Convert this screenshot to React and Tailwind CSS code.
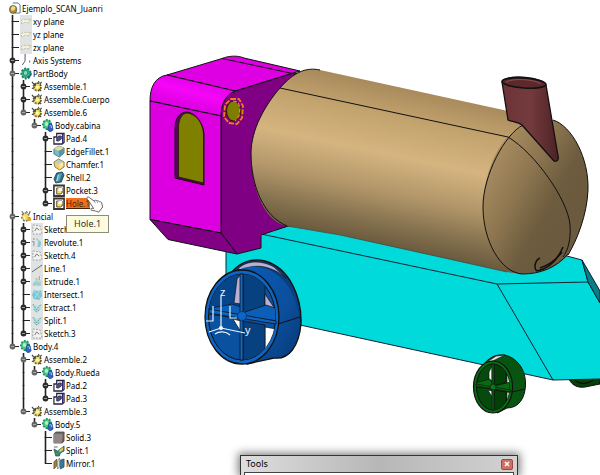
import React, { useState } from "react";

const TREE = [
  { icon: "plane", label: "xy plane" },
  { icon: "plane", label: "yz plane" },
  { icon: "plane", label: "zx plane" },
  { icon: "axis", label: "Axis Systems", node: true },
  {
    icon: "body", label: "PartBody", node: true, children: [
      { icon: "assemble", label: "Assemble.1", node: true },
      { icon: "assemble", label: "Assemble.Cuerpo", node: true },
      {
        icon: "assemble", label: "Assemble.6", node: true, children: [
          {
            icon: "bodyLinked", label: "Body.cabina", node: true, children: [
              { icon: "pad", label: "Pad.4", node: true },
              { icon: "fillet", label: "EdgeFillet.1" },
              { icon: "chamfer", label: "Chamfer.1" },
              { icon: "shell", label: "Shell.2" },
              { icon: "pocket", label: "Pocket.3", node: true },
              { icon: "pocket", label: "Hole.1", node: true, selected: true },
            ],
          },
        ],
      },
    ],
  },
  {
    icon: "set", label: "Incial", node: true, children: [
      { icon: "sketch", label: "Sketch.1", node: true },
      { icon: "revolute", label: "Revolute.1", node: true },
      { icon: "sketch", label: "Sketch.4", node: true },
      { icon: "line", label: "Line.1", node: true },
      { icon: "extrude", label: "Extrude.1", node: true },
      { icon: "intersect", label: "Intersect.1" },
      { icon: "extract", label: "Extract.1", node: true },
      { icon: "extract", label: "Split.1" },
      { icon: "sketch", label: "Sketch.3", node: true },
    ],
  },
  {
    icon: "bodyLinked", label: "Body.4", node: true, children: [
      {
        icon: "assemble", label: "Assemble.2", node: true, children: [
          {
            icon: "bodyLinked", label: "Body.Rueda", node: true, children: [
              { icon: "pad", label: "Pad.2", node: true },
              { icon: "pad", label: "Pad.3", node: true },
            ],
          },
        ],
      },
      {
        icon: "assemble", label: "Assemble.3", node: true, children: [
          {
            icon: "bodyLinked", label: "Body.5", node: true, children: [
              { icon: "solid", label: "Solid.3" },
              { icon: "split", label: "Split.1" },
              { icon: "mirror", label: "Mirror.1" },
            ],
          },
        ],
      },
    ],
  },
];

const Haze = () => <rect width="13" height="13" fill="#dfe3e3" />;

const ICONS = {
  root: (
    <>
      <path d="M4 1h6l2 2v8H6" fill="#fff" stroke="#3a7d96" />
      <circle cx="4.500" cy="7.500" r="4" fill="#a98b3a" stroke="#5a4a22" strokeWidth=".7" />
      <path d="M2 6l2-2 3 1-1 3-3 1z" fill="#f1dc84" />
    </>
  ),
  plane: (
    <>
      <Haze />
      <path d="M1 6l3-2 3 1 5-1-2 4-4-1-4 2z" fill="#efefe0" stroke="#b5b28a" strokeWidth=".7" strokeDasharray="3 1" />
      <path d="M3 6h6" stroke="#fff9cc" />
    </>
  ),
  axis: <path d="M5.500 0v7l-3 4M10.500 6.500v2" fill="none" stroke="#555" strokeWidth="1" />,
  body: (
    <>
      <circle cx="6.500" cy="6.500" r="5" fill="#35b58a" />
      <circle cx="6.500" cy="6.500" r="5" fill="none" stroke="#1a7a66" strokeWidth="2" strokeDasharray="2 1.500" />
      <circle cx="6" cy="6" r="2.500" fill="#7fe0ae" stroke="#177763" strokeWidth=".8" />
      <path d="M8 10c3 0 4-2 4-4" fill="none" stroke="#175c7c" strokeWidth="1.200" />
    </>
  ),
  bodyLinked: (
    <>
      <circle cx="5.500" cy="5.500" r="4.600" fill="#45c78c" />
      <circle cx="5.500" cy="5.500" r="4.600" fill="none" stroke="#23906a" strokeWidth="1.800" strokeDasharray="2 1.300" />
      <circle cx="5" cy="5" r="2" fill="#b4f1ad" />
      <path d="M8 4l3 2 1 5-3 2-3-2z" fill="#2f64c4" stroke="#173c80" strokeWidth=".7" />
      <path d="M8 7c2-1 3 0 2 2" stroke="#a4d8f5" fill="none" />
    </>
  ),
  assemble: (
    <>
      <circle cx="7" cy="7" r="3.800" fill="#efe06a" stroke="#60541a" strokeWidth="1.800" strokeDasharray="2 1.400" />
      <path d="M1 2l4 4M2 6l4-3M8 1l1 2M11.500 2l-2 2M1 8l2 1M11 11l-2-2" stroke="#444" strokeWidth="1.100" />
      <circle cx="7" cy="7" r="1.500" fill="#fff9b8" />
      <path d="M4 9l2 2" stroke="#c79021" />
    </>
  ),
  set: (
    <>
      <circle cx="6" cy="7" r="4" fill="#f3dc70" stroke="#7c7150" strokeWidth="1.600" strokeDasharray="2 1.500" />
      <path d="M2 1l2 3M7 1l1 2M11 1l-1 3" stroke="#555" />
      <path d="M8 7l4 1v3H8z" fill="#e6a23a" />
      <path d="M3 6l3 1-1 3" fill="#fffbd5" />
    </>
  ),
  pad: (
    <>
      <path d="M4 1.500h8v9l-2 1.500H1V5h3z" fill="#fff" stroke="#27233f" strokeWidth="1.300" />
      <path d="M4 6l2-2h3v3L6 9H4z" fill="#55506e" stroke="#25204d" strokeWidth=".8" />
      <path d="M10.500 2v9" stroke="#2e2a7c" strokeWidth="1.500" />
    </>
  ),
  fillet: (
    <>
      <path d="M1 4l5-3 6 2v5l-5 4-6-3z" fill="#79bdca" stroke="#39697a" strokeWidth=".8" />
      <path d="M1 4l5-3 6 2-5 3z" fill="#e8dc98" />
      <path d="M6 6l6-3v5l-5 4z" fill="#5496a5" />
    </>
  ),
  chamfer: (
    <>
      <path d="M1 4l5-3 6 3v5l-5 3-5-3z" fill="#f3cf68" stroke="#77652b" strokeWidth=".8" />
      <path d="M2 4l4-2 5 2-4 2z" fill="#a8cfe5" />
      <path d="M7 6l4-2v4l-4 3z" fill="#fdeaa3" />
    </>
  ),
  shell: (
    <>
      <path d="M4 2l6-1 2 3-3 7-6 1-2-4z" fill="#2d6d86" stroke="#1b3a4b" strokeWidth=".8" />
      <path d="M5 3l5-1-3 8-4 1z" fill="#58a3b6" />
      <path d="M6 4l-2 6" stroke="#c5e9f0" />
    </>
  ),
  pocket: (
    <>
      <path d="M1 1.500h11v10.500H1z" fill="#fff" stroke="#3a3634" strokeWidth="1.800" />
      <path d="M4 4h6v5l-2 1H4z" fill="#f2df74" stroke="#4a401c" strokeWidth=".9" />
      <path d="M6 4h4v3H6z" fill="#fff" />
    </>
  ),
  sketch: (
    <>
      <Haze />
      <path d="M2 2l8 1 2 8H2z" fill="#f2f3f1" stroke="#858a8a" strokeWidth=".8" strokeDasharray="2 1.500" />
      <path d="M4 8l2-3 3 2" stroke="#555" strokeWidth=".8" fill="none" />
    </>
  ),
  revolute: (
    <>
      <Haze />
      <path d="M3 2v9M6 3l4 3-1 5" stroke="#a98f72" fill="none" strokeDasharray="2 1" />
      <path d="M8 4l3 2-1 5H7z" fill="#86cbd0" />
      <path d="M1 5l3 3" stroke="#67a7a9" />
    </>
  ),
  line: (
    <>
      <Haze />
      <path d="M1 10L12 3" stroke="#666" strokeWidth="1" />
    </>
  ),
  extrude: (
    <>
      <Haze />
      <path d="M2 8l3-3 7 1-2 5H3z" fill="#a5dadd" />
      <path d="M9 1v4M5 3l2 2" stroke="#bf936b" />
      <path d="M2 10l4-2 5 2" stroke="#7a9e91" fill="none" strokeDasharray="1 1" />
    </>
  ),
  intersect: (
    <>
      <Haze />
      <path d="M3 2l4 1 4-1 1 6-3 4-6-1-2-4z" fill="#7ec6d3" />
      <path d="M3 3l7 7M9 3l-5 7" stroke="#b9eef2" strokeDasharray="2 1" />
    </>
  ),
  extract: (
    <>
      <Haze />
      <path d="M2 3l5 2 5-2-2 6-4 3-3-3z" fill="#b3e0df" />
      <path d="M2 3l4 6 5-6M3 8l3 3 4-3" stroke="#5d8890" fill="none" strokeWidth=".8" strokeDasharray="2 1" />
    </>
  ),
  solid: (
    <>
      <path d="M1 3l2-2h9v9l-2 2H1z" fill="#6d6969" stroke="#4b3d42" strokeWidth=".8" />
      <path d="M1 3h9v9H1z" fill="#8d8987" />
      <path d="M11 8v2l-2 2" stroke="#b3213b" fill="none" />
    </>
  ),
  split: (
    <>
      <path d="M1 5l4 2 7-5v5l-4 2-1 3H3z" fill="#3f8a79" stroke="#1f4940" strokeWidth=".7" />
      <path d="M6 7l5-4v3L8 8z" fill="#e4cd59" />
      <path d="M1 3h4" stroke="#666" />
    </>
  ),
  mirror: (
    <>
      <path d="M1 5l3-3v7l-3 3z" fill="#a5852b" stroke="#4e4420" strokeWidth=".7" />
      <path d="M5 4l2-3v9l-2 2z" fill="#dcecf3" stroke="#557" strokeWidth=".6" />
      <path d="M8 3l4-1v8l-4 2z" fill="#327c9d" stroke="#1a4357" strokeWidth=".7" />
    </>
  ),
};

function Icon({ kind }) {
  return (
    <svg viewBox="0 0 13 13" className="ml-0.5 h-[13px] w-3 shrink-0" preserveAspectRatio="none" aria-hidden="true">
      {ICONS[kind]}
    </svg>
  );
}

function Guide({ top = true, bottom, stub }) {
  return (
    <svg viewBox="0 0 11 13" className="h-[13px] w-[11px] shrink-0 overflow-visible" aria-hidden="true">
      {top && <path d="M5.500 0V7" stroke="#222" strokeWidth="1.600" />}
      {bottom && <path d="M5.500 6V13" stroke="#222" strokeWidth="1.600" />}
      {stub && <path d="M5 6.500H12" stroke="#222" />}
    </svg>
  );
}

function Pointer() {
  return (
    <svg viewBox="0 0 18 17" className="absolute -top-0.5 left-5 z-10 h-[17px] w-[18px]" aria-hidden="true">
      <path
        d="M1 1.500c1-1 2-.5 3 .5l4 3c1-1 2-1 3 0 1-.5 2 0 2.500.7 1-.2 2 .3 2.200 1.300l1 4-4 5.200-3-1.200-4-.7c-1.500-.8-1-2 .5-2l1.500.2L2 4C1 3 .5 2.300 1 1.500z"
        fill="#fff"
        stroke="#555"
        strokeWidth=".9"
      />
      <path d="M8 5l1.500 2M11 5.500l1 1.500" stroke="#777" strokeWidth=".8" />
    </svg>
  );
}

function TreeItem({ item, trail, last }) {
  const [open, setOpen] = useState(true);
  const hasChildren = Boolean(item.children);
  return (
    <li>
      <div className="flex h-[13px] items-center">
        {trail.map((continues, i) => (
          <Guide key={i} top={continues} bottom={continues} />
        ))}
        {item.node ? (
          <button
            type="button"
            aria-label={"Toggle " + item.label}
            onClick={() => setOpen(!open)}
            className="relative block h-[13px] w-[11px] shrink-0"
          >
            <Guide bottom={!last} stub />
            <svg viewBox="0 0 7 7" className="absolute top-[3px] left-[2px] h-[7px] w-[7px]" aria-hidden="true">
              <circle cx="3.500" cy="3.500" r="2.900" fill={hasChildren ? "#666" : "#2b2b2b"} />
              <path d="M2 3.500h3" stroke="#bbb" strokeWidth=".8" />
            </svg>
          </button>
        ) : (
          <Guide bottom={!last} stub />
        )}
        <Icon kind={item.icon} />
        {item.selected ? (
          <span className="relative ml-px">
            <span className="block bg-[#ee6f1d] leading-[11px] text-[#4a1c00] underline">{item.label}</span>
            <Pointer />
            <span
              role="tooltip"
              className="absolute top-[17px] left-0 z-10 border border-[#8d8d7c] bg-[#fbfbdf] px-[7px] text-[9px] leading-4 text-[#333]"
            >
              {item.label}
            </span>
          </span>
        ) : (
          <span className="ml-px">{item.label}</span>
        )}
      </div>
      {hasChildren && open && (
        <ul>
          {item.children.map((child, i) => (
            <TreeItem
              key={child.label + i}
              item={child}
              trail={[...trail, !last]}
              last={i === item.children.length - 1}
            />
          ))}
        </ul>
      )}
    </li>
  );
}

function SpecTree() {
  return (
    <nav
      aria-label="Specification tree"
      className="w-[140px] shrink-0 pt-0.5 pl-[7px] font-['Noto_Sans',sans-serif] text-[8px] leading-[13px] whitespace-nowrap text-black"
    >
      <div className="flex h-[13px] items-center">
        <Icon kind="root" />
        <span className="ml-px">Ejemplo_SCAN_Juanri</span>
      </div>
      <ul>
        {TREE.map((item, i) => (
          <TreeItem key={item.label} item={item} trail={[]} last={i === TREE.length - 1} />
        ))}
      </ul>
    </nav>
  );
}

function Model() {
  return (
    <svg viewBox="140 0 460 475" className="block h-auto w-full" role="img" aria-label="Locomotive model">
      <defs>
        <linearGradient id="boiler" gradientUnits="userSpaceOnUse" x1="400" y1="84" x2="366" y2="246">
          <stop offset="0" stopColor="#a5875a" />
          <stop offset=".2" stopColor="#c2a26d" />
          <stop offset=".43" stopColor="#d5b480" />
          <stop offset=".65" stopColor="#b3976a" />
          <stop offset=".85" stopColor="#83704e" />
          <stop offset="1" stopColor="#66563a" />
        </linearGradient>
        <linearGradient id="nose" gradientUnits="userSpaceOnUse" x1="485" y1="170" x2="565" y2="215">
          <stop offset="0" stopColor="#a98d61" />
          <stop offset=".45" stopColor="#8b744f" />
          <stop offset=".8" stopColor="#6d5c3e" />
          <stop offset="1" stopColor="#6b5a3d" />
        </linearGradient>
        <linearGradient id="stack" x1="0" x2="1">
          <stop offset="0" stopColor="#6d3336" />
          <stop offset=".5" stopColor="#743b3e" />
          <stop offset="1" stopColor="#4d2225" />
        </linearGradient>
        <linearGradient id="rim" x1="0" y1="0" x2="1" y2="1">
          <stop offset="0" stopColor="#0a5cb8" />
          <stop offset=".6" stopColor="#0b4f9d" />
          <stop offset="1" stopColor="#063873" />
        </linearGradient>
        <linearGradient id="roll" gradientUnits="userSpaceOnUse" x1="200" y1="82" x2="193" y2="110">
          <stop offset="0" stopColor="#e500ea" />
          <stop offset=".4" stopColor="#f506f8" />
          <stop offset="1" stopColor="#da00df" />
        </linearGradient>
        <clipPath id="wheelInner">
          <ellipse cx="242" cy="317" rx="33.500" ry="43" />
        </clipPath>
        <clipPath id="greenInner">
          <ellipse cx="493" cy="387" rx="16.500" ry="23" />
        </clipPath>
      </defs>

      <g stroke="#111" strokeWidth="1" strokeLinejoin="round">
        {/* far wheel */}
        <path d="M569 379c3 7 10 9 16 8l15-3v-6z" fill="#063f0a" />
        <path d="M575 380c4 4 11 5 18 0" fill="none" stroke="#000" />

        {/* chassis */}
        <path d="M226 249L261 234 288 226 440 250 563 255 582 260 600 291V379L553 380 300 325 226 309z" fill="#00dada" stroke="none" />
        <path d="M226 250V309M288 226L261 234M261 234L497 284 588 282M497 284L553 380M563 255L582 260 588 282 600 303M300 325L553 380 600 379" fill="none" stroke="#123" />
        <path d="M582 260L588 282 600 303V291z" fill="#087d87" stroke="#123" />

        {/* cabin */}
        <path d="M235 91L293 73 330 75V226H288L261 235V248L237 254 221 233V116C221 103 226 95 235 91z" fill="#800083" />
        <path d="M167 75L222 58.500C228 56 237 55 244 58L300 71 293 73 235 91z" fill="#de00e3" />
        <path d="M222 58.500L295 74" fill="none" />
        <path d="M150 101C150 87 155 77 167 75L235 91C226 95 221 103 221 116z" fill="url(#roll)" />
        <path d="M150 101L221 116V233L150 219.500z" fill="#dc00e1" />
        <path d="M150 219.500L221 233 237 254 168 239.500z" fill="#820085" />

        {/* window */}
        <path d="M175 178V128C175 118 180 112 187 112C196 113 203 123 204 134V185z" fill="#5c005f" />
        <path d="M178.500 177V128C178.500 119 182 113 187.500 113C196 114 203 123 203.500 134V183z" fill="#808000" stroke="#211500" strokeWidth=".8" />

        {/* highlighted hole */}
        <ellipse cx="233.500" cy="111" rx="7" ry="10" fill="#7d7d00" stroke="#2c1500" />
        <path d="M231 99L239 99 243 106 242 118 237 124 229 123 224 117 225 105z" fill="none" stroke="#f27b20" strokeWidth="1.800" strokeDasharray="5 1.500" />
        <path d="M233 101L238 102 240 108 239 116 235 121" fill="none" stroke="#f58a25" strokeWidth="1.200" strokeDasharray="4 2" />

        {/* boiler */}
        <path
          d="M320 70C306 67 294 72 280 88C265 105 251 130 251 153C251 185 263 222 287 226L340 235 507 272 522 274L523 125 508 111z"
          fill="url(#boiler)"
          stroke="none"
        />
        <path d="M320 70C306 67 294 72 280 88C265 105 251 130 251 153C251 185 263 216 287 226" fill="none" />
        <path d="M287 226L340 235 440 257 507 272" fill="none" stroke="#3b4a40" strokeWidth=".7" />
        <path
          d="M523 125L553 120C572 126 589 158 588 190C587 215 577 240 568 255C555 269 540 273 522 274C500 270 484 240 483 207C483 180 495 148 508 137z"
          fill="url(#nose)"
          stroke="none"
        />
        <path d="M523 125C505 134 483 175 483 207C483 240 500 272 522 274C540 274 556 268 568 254M553 120C572 126 589 158 588 190C587 215 577 240 568 255" fill="none" />
        <path d="M280 88L508 137C535 153 568 200 570 225C571 240 568 250 563 257" fill="none" />
        <path d="M540 258C534 261 534 269 537 271C547 269 557 261 563 247" fill="none" strokeWidth="1.500" />
        <path d="M540 268C549 265 557 259 562 252" fill="none" strokeWidth="1.500" />

        {/* smokestack */}
        <path d="M502 82L508 120C513 122 518 122 522 125L554 161C557 162 559 160 558 156L546 85C540 76 505 74 502 82z" fill="url(#stack)" strokeWidth="1.300" />
        <ellipse cx="524" cy="83" rx="22" ry="5" transform="rotate(4 524 83)" fill="#5b292c" strokeWidth="1.600" />
        <path d="M506 82C512 78 535 79 541 84" fill="none" stroke="#8c5053" />

        {/* drive wheel */}
        <path d="M232 272C240 262 252 258 265 261C290 268 302 298 301 324C299 346 289 360 274 358L247 364C230 350 226 290 232 272z" fill="#0a3f80" strokeWidth="1.300" />
        <path d="M238 269C246 260 262 260 274 267L286 278C272 266 255 263 243 270z" fill="#b9aed3" strokeWidth=".7" />
        <path d="M236 271C254 261 275 268 287 285C300 303 303 328 295 343C289 355 282 358 272 357L247 364C265 355 279 343 279 317z" fill="url(#rim)" stroke="none" />
        <path d="M278 324L300 317" fill="none" />
        <ellipse cx="242" cy="317" rx="37" ry="47" fill="#0d66c5" strokeWidth="1.300" />
        <ellipse cx="242" cy="317" rx="33.500" ry="43" fill="#0a519f" />
        <g clipPath="url(#wheelInner)" strokeWidth=".7">
          <path d="M205 268H241V308H205z" fill="#07458b" stroke="none" />
          <path d="M237 279L241 274V304L234 303z" fill="#b9aed3" />
          <path d="M243 268L265 282V306L243 313z" fill="#07417f" />
          <path d="M265 294L275 309 265 307z" fill="#b9aed3" />
          <path d="M265 327L276 329 272 345 265 352z" fill="#fff" />
          <path d="M243 321L265 325V353L243 362z" fill="#07417f" />
          <path d="M233 319L241 321V332z" fill="#fff" />
          <path d="M207 309L232 304 241 307V319L208 314z" fill="#0b5fb9" />
          <path d="M245 312L266 305 278 309V321L246 317z" fill="#0b5fb9" />
        </g>
        <path d="M240 274H243V360H240z" fill="#0d66c5" strokeWidth=".8" />
        <path d="M209 309L276 321V324L209 313z" fill="#0d66c5" strokeWidth=".8" />
        <circle cx="242" cy="316" r="4.500" fill="#0d66c5" stroke="#0a3a78" />

        {/* compass */}
        <g fill="none" stroke="#e7f5ff" strokeWidth="1.200">
          <path d="M221 328V296M221 328L245 333M221 328L209 332M206 321H213V306M230 306V318H237M215 334C219 331 226 331 230 335" />
          <circle cx="221" cy="328" r="1.500" fill="#fff" />
        </g>

        {/* front wheel */}
        <path d="M484 364C490 356 500 353 508 356C521 361 526 374 525.500 385C525 398 519 408 507 408L497 413z" fill="#075511" />
        <path d="M487 362L496 356 505 355 493 361z" fill="#dedede" strokeWidth=".7" />
        <path d="M512 392L525 389" fill="none" />
        <ellipse cx="493" cy="387" rx="19.500" ry="26" fill="#086b13" strokeWidth="1.200" />
        <ellipse cx="493" cy="387" rx="16.500" ry="23" fill="#064b0d" />
        <g clipPath="url(#greenInner)" strokeWidth=".7">
          <path d="M489 372L492 366V381L489 380z" fill="#fff" />
          <path d="M494 363L506 370V382L494 386z" fill="#043f0a" />
          <path d="M507 374L511 383H507z" fill="#fff" />
          <path d="M475 383L490 379 494 386 511 382 513 390 493 389 475 387z" fill="#086b13" />
          <path d="M494 390L506 392V407L494 412z" fill="#043f0a" />
          <path d="M507 392L511 393 507 402z" fill="#fff" />
          <path d="M488 390L492 391V397z" fill="#fff" />
        </g>
        <path d="M492 364H494V410H492zM476 384L511 390V392L476 386z" fill="#086b13" strokeWidth=".7" />
        <circle cx="493" cy="387" r="3" fill="#0a7a18" strokeWidth=".7" />
      </g>

      <g fill="#e7f5ff" className="font-['Liberation_Sans',sans-serif] text-[11px]">
        <text x="220" y="296">z</text>
        <text x="245" y="334">y</text>
      </g>
    </svg>
  );
}

function ToolsWindow() {
  return (
    <section
      aria-label="Tools"
      className="absolute bottom-0 left-[240px] h-5 w-[278px] border border-b-0 border-[#333] bg-linear-to-r from-[#dedede] via-[#b7b7b7] to-[#d2d2d2] px-[3px] shadow-[0_0_8px_2px_rgba(0,0,0,0.5)]"
    >
      <header className="flex h-4 items-center justify-between pr-px pl-0.5 font-['Noto_Sans',sans-serif] text-[9px] leading-4 text-black">
        <h2>Tools</h2>
        <button type="button" aria-label="Close" className="flex h-[11px] w-3 items-center justify-center rounded-xs border border-[#9b4a43] bg-[#cf6e64]">
          <svg viewBox="0 0 6 6" className="h-1.5 w-1.5" aria-hidden="true">
            <path d="M1 1l4 4M5 1L1 5" stroke="#fff" strokeWidth="1.500" />
          </svg>
        </button>
      </header>
      <div className="h-1 border border-b-0 border-[#444] bg-white" />
    </section>
  );
}

export default function App() {
  return (
    <main className="relative flex min-h-screen items-start overflow-hidden bg-white">
      <SpecTree />
      <div className="min-w-0 flex-1">
        <Model />
      </div>
      <ToolsWindow />
    </main>
  );
}
